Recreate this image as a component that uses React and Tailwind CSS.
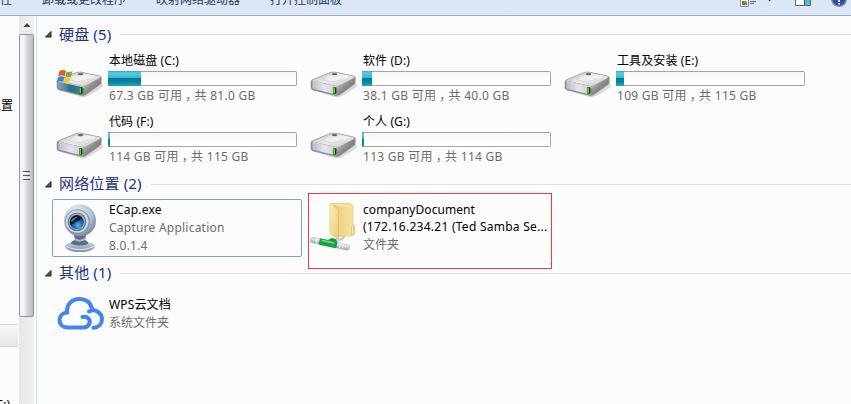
import React from "react";

const drives = [
  { name: "本地磁盘 (C:)", free: "67.3 GB 可用", total: "共 81.0 GB", used: 33, system: true },
  { name: "软件 (D:)", free: "38.1 GB 可用", total: "共 40.0 GB", used: 10 },
  { name: "工具及安装 (E:)", free: "109 GB 可用", total: "共 115 GB", used: 8 },
  { name: "代码 (F:)", free: "114 GB 可用", total: "共 115 GB", used: 2 },
  { name: "个人 (G:)", free: "113 GB 可用", total: "共 114 GB", used: 2 },
];

function DriveIcon({ system }) {
  return (
    <svg width="50" height="36" viewBox="0 0 50 36" className="block">
      <defs>
        <linearGradient id="dTop" x1="0" y1="0" x2="1" y2="1">
          <stop offset="0" stopColor="#b4b4b4" />
          <stop offset=".5" stopColor="#ededed" />
          <stop offset="1" stopColor="#c4c4c4" />
        </linearGradient>
        <linearGradient id="dSide" x1="0" y1="0" x2="1" y2="1">
          <stop offset="0" stopColor="#dcdcdc" />
          <stop offset=".5" stopColor="#8a8a8a" />
          <stop offset="1" stopColor="#696969" />
        </linearGradient>
        <linearGradient id="dFront" x1="0" y1="0" x2="1" y2="0">
          <stop offset="0" stopColor="#b9bac0" />
          <stop offset=".5" stopColor="#e6e6f2" />
          <stop offset="1" stopColor="#c5c5cf" />
        </linearGradient>
        <linearGradient id="dSys" x1="0" y1="0" x2="1" y2="0">
          <stop offset="0" stopColor="#8aa7b5" />
          <stop offset=".5" stopColor="#236f91" />
          <stop offset="1" stopColor="#3f8d91" />
        </linearGradient>
      </defs>
      <g transform="translate(.5 3.600) scale(.98 .86)">
        <path d="M3 26 L28 35 Q32 35 49 22 L47 17 Z" fill="#777" opacity=".25" />
        <path d="M1.500 16 Q1.500 14.500 3 14 L21 5.600 Q23 4.800 26 5.200 L44.500 9.500 Q47 10.300 47 12.500 L46.500 18 Q46 19.500 44.500 20.500 L31 31.500 Q29 33 26.500 32.500 L3.500 26 Q1.500 25.300 1.500 23.500 Z" fill="#999" stroke="#8d8d8d" strokeWidth=".5" />
        <path d="M28.500 22 L46.500 11.500 L46 18.500 L31 31 L28 32 Z" fill="url(#dSide)" />
        <path d="M2.500 15 L21.500 6 Q23.500 5.200 26 5.800 L44.500 10 Q46.500 11 45 12 L30 21 Q28.500 22 26 21.500 Z" fill="url(#dTop)" />
        <path d="M15 13.500 Q17 8 26 7.800 Q36 8 40 11 L31 16 Q20 19 15 13.500Z" fill="#fff" opacity=".35" />
        <path d="M14 14 Q24 19 34 13" fill="none" stroke="#b8b8b8" strokeWidth=".5" />
        <ellipse cx="25.500" cy="7.600" rx="2.800" ry="1.200" fill="#666" />
        <path d="M2.300 17 Q2.500 15.800 4 16 L26 21.600 Q28.800 22.500 28.800 24.500 L28.500 30.500 Q28 32 26 31.500 L4 25.200 Q2.500 24.800 2.400 23 Z" fill={system ? "url(#dSys)" : "url(#dFront)"} stroke="#7d7d7d" strokeWidth=".8" />
        <path d="M3.500 16 L26.500 22 Q28.600 22.500 28.800 24" fill="none" stroke="#f5f5f5" strokeWidth=".8" />
        <rect x="24" y="22.800" width="3.600" height="7.500" rx=".7" fill="#173f0e" />
        <rect x="24.400" y="23.500" width="1.600" height="6" fill="#53ec28" />
      </g>
      {system && (
        <g transform="translate(0 2.600)">
          <path d="M4.500 4.500 Q8 2.500 11 4.500 L9.700 9.500 Q6.500 8.300 3.200 9.700Z" fill="#e0602c" />
          <path d="M11.600 5 Q14 6.200 17.500 4.500 L16 9.800 Q13 11 10.300 9.600Z" fill="#79b13a" />
          <path d="M3 10.300 Q6.500 8.900 9.500 10.300 L8 15.500 Q5 13.800 1.700 15.500Z" fill="#3a86cc" />
          <path d="M10.100 10.400 Q12.800 11.700 15.800 10.500 L14.300 15.800 Q11.500 17.300 8.600 15.700Z" fill="#f8c634" />
        </g>
      )}
    </svg>
  );
}

function WebcamIcon() {
  return (
    <svg width="34" height="50" viewBox="0 0 34 50" className="block">
      <defs>
        <radialGradient id="wBody" cx=".4" cy=".3" r=".75">
          <stop offset="0" stopColor="#f2f6fb" />
          <stop offset=".6" stopColor="#b5c2d3" />
          <stop offset="1" stopColor="#6d7f98" />
        </radialGradient>
        <radialGradient id="wLens" cx=".6" cy=".75" r=".7">
          <stop offset="0" stopColor="#57b6f4" />
          <stop offset=".5" stopColor="#1c62ae" />
          <stop offset="1" stopColor="#121c2c" />
        </radialGradient>
        <linearGradient id="wBase" x1="0" y1="0" x2="0" y2="1">
          <stop offset="0" stopColor="#dde5ef" />
          <stop offset="1" stopColor="#75869d" />
        </linearGradient>
      </defs>
      <ellipse cx="17" cy="43.500" rx="14.800" ry="5.500" fill="url(#wBase)" />
      <path d="M3 43.500 Q17 50 31 43.500" fill="none" stroke="#e5ebf3" strokeWidth="1" />
      <path d="M11 32 H23 L22 37 Q26 39 25 41 Q17 44 8 41 Q8 38 12 37Z" fill="#5d6e85" />
      <path d="M12 36 Q17 40 23 35" stroke="#aebac9" strokeWidth="2" fill="none" />
      <circle cx="17" cy="17.500" r="16" fill="url(#wBody)" />
      <circle cx="14.500" cy="18.500" r="12.300" fill="#8495ab" />
      <circle cx="14.200" cy="18.500" r="11.300" fill="#cdd7e3" />
      <circle cx="14" cy="18.800" r="9.300" fill="#5d6f87" />
      <circle cx="14" cy="18.800" r="8.200" fill="#a0aebf" />
      <circle cx="13.800" cy="19" r="7" fill="url(#wLens)" />
      <path d="M7 20 Q7 13 16 13 Q19 15 17 17 Q13 18 8 22Z" fill="#101720" />
      <path d="M8 18 Q10 14 15 13.500 L9 19Z" fill="#7890a8" opacity=".8" />
    </svg>
  );
}

function NetworkFolderIcon() {
  return (
    <svg width="46" height="54" viewBox="0 0 46 54" className="block">
      <defs>
        <linearGradient id="fBack" x1="0" y1="0" x2="1" y2="0">
          <stop offset="0" stopColor="#dcb962" />
          <stop offset=".35" stopColor="#f0d486" />
          <stop offset="1" stopColor="#f6e3a2" />
        </linearGradient>
        <linearGradient id="fFront" x1="0" y1="0" x2="1" y2="1">
          <stop offset="0" stopColor="#fdf0b8" />
          <stop offset="1" stopColor="#e9cb74" />
        </linearGradient>
        <linearGradient id="pipe" x1="0" y1="0" x2="0" y2="1">
          <stop offset="0" stopColor="#eef4f4" />
          <stop offset=".6" stopColor="#c0cccd" />
          <stop offset="1" stopColor="#8e9d9f" />
        </linearGradient>
      </defs>
      <path d="M21 4.500 L39 4 Q43 5 43 7 V25 L44.500 26.500 V35.500 L42 37 L27 37.500Z" fill="url(#fBack)" stroke="#dcbf6c" strokeWidth=".5" />
      <path d="M22 5 L37 7 Q40 7.500 40 9" stroke="#fdf3c8" strokeWidth=".9" fill="none" />
      <path d="M20 5.500 Q20 4 21.500 4.800 L27 9.500 Q28.500 11 28.500 13 V39.500 Q28.500 41 27 40 L21 35 Q20 34 20 33 Z" fill="url(#fFront)" stroke="#d9b95f" strokeWidth=".6" />
      <path d="M41.800 27.500 L43.800 26.500 V35 L41.800 36Z" fill="#fff8d9" stroke="#c7a84e" strokeWidth=".6" />
      <path d="M25 41.500 Q33 41 34.500 37" fill="none" stroke="#c5ced0" strokeWidth="2.200" />
      <g transform="translate(0 2) rotate(12 20 43)">
        <rect x="0" y="40" width="40" height="5.500" rx="2.700" fill="url(#pipe)" stroke="#a3b0b1" strokeWidth=".5" />
        <rect x="9" y="39.500" width="18" height="6.500" rx="1.500" fill="#18a043" />
        <rect x="11" y="40.300" width="13" height="1.800" rx="1" fill="#6cd687" />
        <path d="M6 40.500v4.500M30 40.500v4.500M33 40.500v4.500" stroke="#fff" strokeWidth="1" />
        <path d="M17 39.800 L20 36.800 H24 L27 39.800Z" fill="#15953a" />
      </g>
    </svg>
  );
}

function CloudIcon() {
  return (
    <svg width="48" height="36" viewBox="0 0 48 36" fill="none" stroke="#4285f0" strokeWidth="4" strokeLinecap="round" className="block">
      <path d="M25.500 21 C31 20 33.500 23.500 32.500 27 C31.800 30 29.500 31.500 26 31.500 H11 C5.500 31.500 2.500 28 2.500 24 C2.500 20 5.500 17 10 16.500 C9.500 8 15 3 22.500 3 C29 3 33.500 6.500 35 12.500" />
      <path d="M32 15.500 C38 12 45 17 45 23 C45 28 41.500 31.500 36.500 31.800" />
    </svg>
  );
}

function SectionHeader({ title, className }) {
  return (
    <div className={"flex items-center pl-2 " + className}>
      <svg width="7" height="7" viewBox="0 0 7 7" className="mr-[7px] block shrink-0">
        <path d="M6 .5V6H.5Z" fill="#555" stroke="#222" strokeWidth="1" />
      </svg>
      <span className="-mt-[2px] shrink-0 text-[15px] leading-[18px] tracking-[0.15px] whitespace-nowrap text-[#1e3287]">{title}</span>
      <div className="ml-[9px] h-px flex-1 bg-[#e0e0e2]" />
    </div>
  );
}

function Drive({ drive }) {
  return (
    <div className="flex h-[61px] w-[254px]">
      <div className="w-[56px] shrink-0 pt-[11px] pl-[3px]">
        <DriveIcon system={drive.system} />
      </div>
      <div className="w-[189px]">
        <div className="-mt-px h-[19px] pl-px tracking-[0.1px] text-black">{drive.name}</div>
        <div className="flex h-[15px] rounded-[2px] border border-[#a5a5a8] border-l-[#b9b9bb] bg-gradient-to-b from-[#f7f7f8] to-white">
          <div
            className="-my-px -ml-px bg-[linear-gradient(to_bottom,#2ca5bd_0%,#55cde4_12%,#3cb5cf_45%,#07788f_50%,#0785a0_75%,#1baac6_100%)]"
            style={{ width: drive.used }}
          />
        </div>
        <div className="h-[18px] pt-px pl-px tracking-[0.27px] whitespace-nowrap text-[#6d6d6d]">
          {drive.free}
          <span className="relative left-[3px]">，</span>
          {drive.total}
        </div>
      </div>
    </div>
  );
}

function Toolbar() {
  return (
    <div className="flex h-4 shrink-0 items-start overflow-hidden border-b border-[#9badc8] bg-gradient-to-b from-[#dce6f5] from-85% to-[#d9edfa] text-[#1e395b]">
      <div className="-mt-[9px] flex flex-1 gap-[30px] whitespace-nowrap">
        <span className="w-3">性</span>
        <span>卸载或更改程序</span>
        <span>映射网络驱动器</span>
        <span>打开控制面板</span>
      </div>
      <svg width="111" height="8" viewBox="0 0 111 8" className="block">
        <path d="M.5 -1V6.500H8.500V-1" fill="#fff" stroke="#82909f" />
        <path d="M2 1h2v2H2z" fill="#e33" />
        <path d="M4 1h2v2H4z" fill="#46c33a" />
        <path d="M6 1h1v2H6z" fill="#e6a820" />
        <path d="M2 3h2v2H2z" fill="#32a832" />
        <path d="M4 3h1.500v2H4z" fill="#e22" />
        <path d="M5.500 3H7v2H5.500z" fill="#36d" />
        <path d="M10 1.500h6M10 3.500h4" stroke="#536884" />
        <path d="M27.500 -1h4L29.500 1.500Z" fill="#1e395b" />
        <path d="M55.500 -1V5.500H70.500V-1" fill="#fff" stroke="#596878" />
        <path d="M65 -1h5V5h-5z" fill="#56bad5" />
        <path d="M64.500 -1V5" stroke="#344d65" />
        <circle cx="99" cy="-1" r="7.300" fill="#264fb2" stroke="#8c8f98" strokeWidth="1.500" />
        <path d="M99 -1V2M99 3v1.500" stroke="#dfe6f5" strokeWidth="2" />
      </svg>
    </div>
  );
}

function Sidebar() {
  return (
    <div className="flex w-[19px] shrink-0 flex-col overflow-hidden text-black">
      <div className="mt-[81px] -ml-[11px] h-[18px] whitespace-nowrap">位置</div>
      <div className="mt-[209px] h-[23px] w-[18px] shrink-0 border-y border-[#d7d7d7] bg-gradient-to-b from-[#f8f8f8] to-[#e5e5e5]" />
      <div className="mt-[49px] -ml-[7px] whitespace-nowrap">(E:)</div>
    </div>
  );
}

function Scrollbar() {
  return (
    <div className="mr-[2px] flex w-[15px] shrink-0 flex-col items-center bg-gradient-to-r from-[#e7e7e7] to-[#f1f1f1]">
      <svg width="15" height="18" viewBox="0 0 15 18" className="block shrink-0">
        <path d="M4.500 11L8 7L11.500 11Z" fill="#444" />
      </svg>
      <div className="flex h-[283px] w-[15px] flex-col items-center justify-center gap-px rounded-[2px] border border-[#929296] bg-gradient-to-r from-[#f5f5f5] from-30% via-[#d5d5d9] via-55% to-[#bebec4]">
        <div className="h-px w-[7px] bg-[#555]" />
        <div className="h-px w-[7px] bg-white" />
        <div className="h-px w-[7px] bg-[#555]" />
        <div className="h-px w-[7px] bg-white" />
        <div className="h-px w-[7px] bg-[#555]" />
      </div>
    </div>
  );
}

export default function App() {
  return (
    <div className="flex h-[404px] w-[851px] flex-col overflow-hidden bg-[#fcfcfc] font-['Noto_Sans','Noto_Sans_CJK_SC',sans-serif] text-[12px] leading-[18px]">
      <Toolbar />
      <div className="flex min-h-0 flex-1">
        <Sidebar />
        <Scrollbar />
        <main className="min-w-0 flex-1 border-l border-[#cfe0f3]">
          <SectionHeader title="硬盘 (5)" className="h-[37px]" />
          <div className="flex flex-wrap pl-[15px]">
            {drives.map((d) => (
              <Drive key={d.name} drive={d} />
            ))}
          </div>
          <SectionHeader title="网络位置 (2)" className="mb-px h-[18px]" />
          <div className="flex h-[70px] pt-[5px] pl-[15px]">
            <div className="flex h-[58px] w-[250px] rounded-[2px] border border-[#7da2ce] pl-[10px]">
              <div className="w-[46px] pt-[3px]">
                <WebcamIcon />
              </div>
              <div className="pt-px tracking-[0.23px] whitespace-nowrap text-[#6d6d6d]">
                <div className="text-black">ECap.exe</div>
                <div>Capture Application</div>
                <div>8.0.1.4</div>
              </div>
            </div>
            <div className="relative ml-[8px] flex h-[58px] w-[242px]">
              <div className="w-[53px] shrink-0">
                <NetworkFolderIcon />
              </div>
              <div className="pt-[2px] leading-[17px] whitespace-nowrap text-black">
                <div className="tracking-[0.08px]">companyDocument</div>
                <div className="tracking-[0.26px]">(172.16.234.21 (Ted Samba Se...</div>
                <div className="pt-px text-[#6d6d6d]">文件夹</div>
              </div>
              <div className="absolute -top-[6px] -left-[2px] h-[76px] w-[244px] border border-[#ef3b3b]" />
            </div>
          </div>
          <SectionHeader title="其他 (1)" className="h-[18px]" />
          <div className="flex pt-[14px] pl-[20px]">
            <div className="w-[52px]">
              <CloudIcon />
            </div>
            <div className="whitespace-nowrap">
              <div className="tracking-[0.14px] text-black">WPS云文档</div>
              <div className="text-[#6d6d6d]">系统文件夹</div>
            </div>
          </div>
        </main>
      </div>
    </div>
  );
}
